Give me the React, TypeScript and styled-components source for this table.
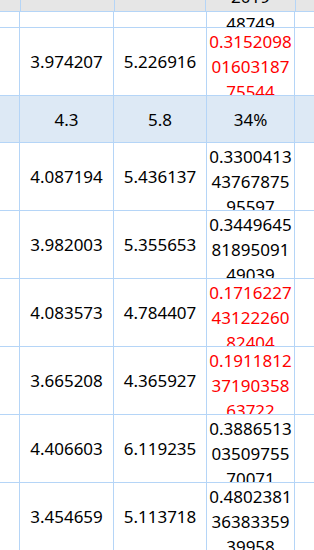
import React from "react";
import styled, { createGlobalStyle } from "styled-components";

const GlobalStyle = createGlobalStyle`
  html, body {
    margin: 0;
    padding: 0;
    background: #fff;
  }
`;

const LINE = "#b5d5f7";

const Sheet = styled.div`
  position: relative;
  width: 314px;
  height: 550px;
  display: flex;
  flex-direction: column;
  overflow: hidden;
  background: #fff;
  font-family: "Noto Sans", "Liberation Sans", sans-serif;
  font-size: 17px;
  line-height: 25px;
  color: #000;
`;

const HeaderRow = styled.div`
  display: grid;
  grid-template-columns: 21px 94px 91px 90px 1fr;
  height: 12px;
  flex: none;
  background: #e6e6e6;
  overflow: hidden;
`;

const HeaderCell = styled.div`
  box-sizing: border-box;
  border-right: 1px solid ${LINE};
  border-bottom: 1px solid ${LINE};
  display: flex;
  align-items: flex-end;
  justify-content: center;
  padding-bottom: 2px;
  overflow: hidden;
  &:last-child {
    border-right: none;
  }
`;

const Viewport = styled.div`
  flex: 1;
  overflow: hidden;
`;

// body is scrolled down a little, first row only partly visible
const Rows = styled.div`
  margin-top: -52px;
`;

const Row = styled.div<{ $summary?: boolean }>`
  display: grid;
  grid-template-columns: 20px 94px 93px 88px 1fr;
  height: ${(p) => (p.$summary ? 47 : 68)}px;
  background: ${(p) => (p.$summary ? "#dde9f5" : "#fff")};
`;

const Cell = styled.div`
  box-sizing: border-box;
  border-right: 1px solid ${LINE};
  border-bottom: 1px solid ${LINE};
  display: flex;
  align-items: center;
  justify-content: center;
  overflow: hidden;
  white-space: nowrap;
  &:last-child {
    border-right: none;
  }
`;

const RateCell = styled(Cell)<{ $bad?: boolean }>`
  align-items: flex-start;
  padding: 1px 1px 0;
  white-space: normal;
  word-break: break-all;
  text-align: center;
  color: ${(p) => (p.$bad ? "#ff0000" : "#000")};
`;

const Watermarks = styled.div`
  position: absolute;
  inset: 0;
  pointer-events: none;
`;

const Mark = styled.span`
  position: absolute;
  font-size: 22px;
  color: rgba(0, 0, 0, 0.022);
  white-space: nowrap;
  transform: rotate(-35deg);
`;

interface Line {
  a: string;
  b: string;
  rate: string;
  bad?: boolean;
  summary?: boolean;
}

const lines: Line[] = [
  { a: "", b: "", rate: "0.35892631548787248749" },
  { a: "3.974207", b: "5.226916", rate: "0.31520980160318775544", bad: true },
  { a: "4.3", b: "5.8", rate: "34%", summary: true },
  { a: "4.087194", b: "5.436137", rate: "0.33004134376787595597" },
  { a: "3.982003", b: "5.355653", rate: "0.34496458189509149039" },
  { a: "4.083573", b: "4.784407", rate: "0.17162274312226082404", bad: true },
  { a: "3.665208", b: "4.365927", rate: "0.19118123719035863722", bad: true },
  { a: "4.406603", b: "6.119235", rate: "0.38865130350975570071" },
  { a: "3.454659", b: "5.113718", rate: "0.48023813638335939958" },
];

const marks = [
  { x: 100, y: 40 },
  { x: -40, y: 175 },
  { x: 265, y: 150 },
  { x: 170, y: 340 },
  { x: 170, y: 520 },
];

export default function App() {
  return (
    <>
      <GlobalStyle />
      <Sheet>
        <HeaderRow>
          <HeaderCell />
          <HeaderCell />
          <HeaderCell />
          <HeaderCell>2019</HeaderCell>
          <HeaderCell />
        </HeaderRow>
        <Viewport>
          <Rows>
            {lines.map((l, i) =>
              l.summary ? (
                <Row key={i} $summary>
                  <Cell />
                  <Cell>{l.a}</Cell>
                  <Cell>{l.b}</Cell>
                  <Cell>{l.rate}</Cell>
                  <Cell />
                </Row>
              ) : (
                <Row key={i}>
                  <Cell />
                  <Cell>{l.a}</Cell>
                  <Cell>{l.b}</Cell>
                  <RateCell $bad={l.bad}>{l.rate}</RateCell>
                  <Cell />
                </Row>
              )
            )}
          </Rows>
        </Viewport>
        <Watermarks>
          {marks.map((m, i) => (
            <Mark key={i} style={{ left: m.x, top: m.y }}>
              10.10.101.18
            </Mark>
          ))}
        </Watermarks>
      </Sheet>
    </>
  );
}
